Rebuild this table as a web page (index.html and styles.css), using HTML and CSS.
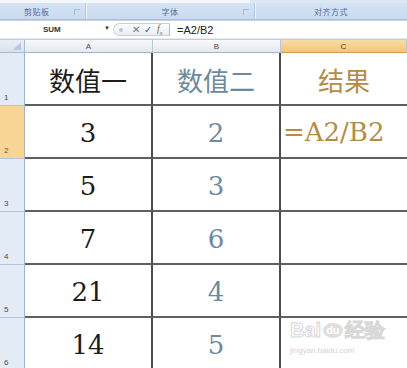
FILE: index.html
```html
<!DOCTYPE html>
<html>
<head>
<meta charset="utf-8">
<link rel="stylesheet" href="styles.css">
</head>
<body>
<div class="app">
  <div class="topstrip"><span class="ts-white"></span></div>
  <div class="ribbon">
    <div class="group g1"><span class="glabel">剪贴板</span><span class="launcher"></span></div>
    <div class="group g2"><span class="glabel">字体</span><span class="launcher"></span></div>
    <div class="group g3"><span class="glabel">对齐方式</span></div>
  </div>
  <div class="fbar">
    <div class="namebox"><span class="nametext">SUM</span><span class="ddarrow">▼</span></div>
    <div class="pill">
      <span class="dot"></span>
      <span class="ficon x">✕</span>
      <span class="ficon ok">✓</span>
      <span class="ficon fx">f<sub>x</sub></span>
    </div>
    <div class="formula">=A2/B2</div>
  </div>
  <div class="gap"></div>
  <div class="sheet">
    <div class="corner"><svg width="10" height="10" viewBox="0 0 10 10"><polygon points="9,1 9,9 1,9" fill="#b7c9de"/></svg></div>
    <div class="colh">A</div>
    <div class="colh">B</div>
    <div class="colh sel">C</div>

    <div class="rowh"><span>1</span></div>
    <div class="cell ca">数值一</div>
    <div class="cell cb">数值二</div>
    <div class="cell cc">结果</div>

    <div class="rowh sel"><span>2</span></div>
    <div class="cell ca num">3</div>
    <div class="cell cb num">2</div>
    <div class="cell cc num left">=A2/B2</div>

    <div class="rowh"><span>3</span></div>
    <div class="cell ca num">5</div>
    <div class="cell cb num">3</div>
    <div class="cell cc"></div>

    <div class="rowh"><span>4</span></div>
    <div class="cell ca num">7</div>
    <div class="cell cb num">6</div>
    <div class="cell cc"></div>

    <div class="rowh"><span>5</span></div>
    <div class="cell ca num">21</div>
    <div class="cell cb num">4</div>
    <div class="cell cc"></div>

    <div class="rowh"><span>6</span></div>
    <div class="cell ca num">14</div>
    <div class="cell cb num">5</div>
    <div class="cell cc"></div>
  </div>
  <div class="watermark">
    <div class="wm1">Bai<span class="du">du</span>经验</div>
    <div class="wm2">jingyan.baidu.com</div>
  </div>
</div>
</body>
</html>
```

FILE: styles.css
```css
html, body {
  margin: 0;
  padding: 0;
  background: #ffffff;
  overflow: hidden;
}
.app {
  position: relative;
  width: 407px;
  height: 368px;
  overflow: hidden;
  font-family: "Liberation Sans", Arial, sans-serif;
}
.topstrip {
  height: 3px;
  background: #dce7f4;
  display: flex;
}
.ts-white {
  width: 250px;
  background: #f4f7fb;
}
.ribbon {
  height: 16px;
  display: flex;
  background: linear-gradient(#d6e3f3, #c9daef);
  border-bottom: 1px solid #aabfd8;
}
.group {
  position: relative;
  display: flex;
  align-items: center;
  justify-content: center;
  border-right: 1px solid #b3c7df;
  box-shadow: 1px 0 0 #eef4fb;
}
.g1 { width: 85px; justify-content: flex-start; }
.g1 .glabel { margin-left: 24px; }
.g2 { width: 168px; }
.g3 { flex: 1; border-right: none; box-shadow: none; }
.glabel {
  font-family: "Noto Sans CJK SC", sans-serif;
  font-size: 8px;
  color: #4d6e9e;
  letter-spacing: 0.5px;
}
.launcher {
  position: absolute;
  right: 5px;
  top: 6px;
  width: 5px;
  height: 5px;
  border-left: 1px solid #9fb3cc;
  border-top: 1px solid #9fb3cc;
  opacity: 0.8;
}
.fbar {
  height: 17px;
  display: flex;
  align-items: center;
  background: #ffffff;
  border-top: 1px solid #c5d2e1;
}
.namebox {
  width: 113px;
  height: 100%;
  display: flex;
  align-items: center;
  position: relative;
}
.nametext {
  margin-left: 43px;
  font-size: 8px;
  font-weight: bold;
  color: #333;
}
.ddarrow {
  position: absolute;
  left: 104px;
  top: 4px;
  font-size: 6px;
  color: #333;
}
.pill {
  width: 57px;
  height: 13px;
  display: flex;
  align-items: center;
  border: 1px solid #c7d1dc;
  border-right: 1px solid #b0bccb;
  border-radius: 8px 0 0 8px;
  background: linear-gradient(#fbfcfd, #e9eef3);
  box-sizing: border-box;
}
.dot {
  width: 4px;
  height: 4px;
  border-radius: 50%;
  background: #b8c6d6;
  margin-left: 5px;
  margin-right: 9px;
}
.ficon {
  font-size: 10px;
  color: #556;
  line-height: 1;
}
.x { color: #6b7687; margin-right: 4px; }
.ok { color: #3e5a7e; margin-right: 5px; }
.fx {
  font-family: "Liberation Serif", serif;
  font-style: italic;
  font-size: 10px;
  color: #7b6a3c;
}
.fx sub { font-size: 6px; }
.formula {
  margin-left: 7px;
  font-size: 11px;
  color: #222;
}
.gap {
  height: 1px;
  background: #e6ebf1;
  border-bottom: 1px solid #c3cdd8;
}
.sheet {
  display: grid;
  grid-template-columns: 25px 128px 128px 1fr;
  grid-template-rows: 13px repeat(6, 53px);
}
.corner {
  background: linear-gradient(#e9eef5, #d9e2ec);
  border-right: 1px solid #a9b9cb;
  border-bottom: 1px solid #a9b9cb;
  display: flex;
  align-items: flex-end;
  justify-content: flex-end;
  padding: 0 2px 1px 0;
}
.colh {
  background: linear-gradient(#f7f9fb, #e3e9f0);
  border-right: 1px solid #b9c6d4;
  border-bottom: 1px solid #a4b4c6;
  font-size: 8px;
  color: #4a4a4a;
  display: flex;
  align-items: center;
  justify-content: center;
}
.colh.sel {
  background: linear-gradient(#f9dca3, #f4c57b);
  border-bottom-color: #d5a14f;
  color: #3d3d3d;
}
.rowh {
  background: #e3ebf6;
  border-right: 1px solid #9fb5cd;
  border-bottom: 1px solid #b5c5d8;
  display: flex;
  align-items: flex-end;
  font-size: 8px;
  color: #4a4a4a;
  padding: 0 0 3px 4px;
}
.rowh.sel {
  background: #f9d595;
  color: #6e5b3a;
}
.cell {
  border-right: 2px solid #4d4d4d;
  border-bottom: 2px solid #5f5f5f;
  display: flex;
  align-items: center;
  justify-content: center;
  font-family: "Noto Sans CJK SC", sans-serif;
  font-size: 26px;
  color: #1c1c1c;
  padding-top: 2px;
}
.cb { color: #6b8aa0; }
.cc { color: #b58b45; border-right: none; }
.num {
  font-family: "DejaVu Serif", "Liberation Serif", serif;
  font-size: 26px;
}
.left {
  justify-content: flex-start;
  padding-left: 2px;
  padding-bottom: 2px;
}
.watermark {
  position: absolute;
  left: 290px;
  top: 320px;
  color: #d6d6d6;
  font-family: "Liberation Sans", sans-serif;
}
.wm1 {
  font-size: 20px;
  font-weight: bold;
  line-height: 1;
  color: transparent;
  -webkit-text-stroke: 1px #d8d8d8;
  display: flex;
  align-items: center;
}
.wm1 .du {
  font-size: 11px;
  background: #dedede;
  color: #fff;
  -webkit-text-stroke: 0;
  border-radius: 50%;
  padding: 2px 3px;
  margin: 0 2px;
}
.wm2 {
  font-size: 8px;
  color: #d2d2d2;
  margin-top: 6px;
}
```
